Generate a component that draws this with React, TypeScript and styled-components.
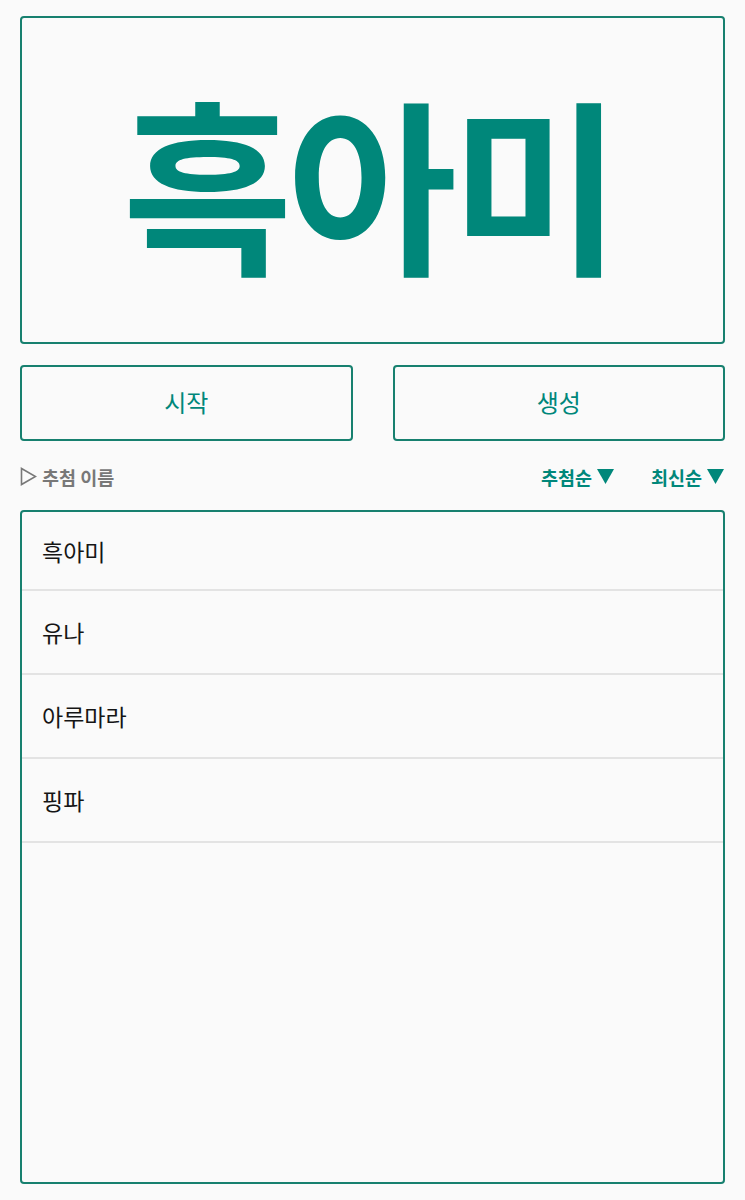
import React from "react";
import styled, { createGlobalStyle } from "styled-components";

const Global = createGlobalStyle`
  html, body { margin: 0; padding: 0; background: #fafafa; }
  body { font-family: "Noto Sans CJK KR", "Noto Sans", sans-serif; }
`;

const TEAL = "#00877a";
const BORDER = "#17806f";

const Page = styled.div`
  box-sizing: border-box;
  height: 1200px;
  padding: 16px 20px 16px 20px;
  display: flex;
  flex-direction: column;
`;

const Display = styled.div`
  box-sizing: border-box;
  height: 328px;
  border: 2px solid ${BORDER};
  border-radius: 4px;
  display: flex;
  align-items: center;
  justify-content: center;
`;

const BigName = styled.div`
  font-size: 187px;
  font-weight: 700;
  color: ${TEAL};
  line-height: 1;
  letter-spacing: -6px;
  transform: translateX(-3px) scaleX(0.99);
  margin-top: -2px;
`;

const ButtonRow = styled.div`
  display: grid;
  grid-template-columns: 1fr 1fr;
  column-gap: 40px;
  margin-top: 21px;
`;

const ActionButton = styled.button`
  box-sizing: border-box;
  height: 76px;
  padding-bottom: 4px;
  border: 2px solid ${BORDER};
  border-radius: 4px;
  background: transparent;
  color: ${TEAL};
  font-family: "Noto Sans CJK KR", sans-serif;
  font-size: 24px;
  font-weight: 400;
`;

const HeaderRow = styled.div`
  box-sizing: border-box;
  display: flex;
  align-items: center;
  height: 69px;
  padding-top: 2px;
`;

const Title = styled.div`
  color: #787878;
  font-size: 18.5px;
  font-weight: 700;
  flex: 1;
  display: flex;
  align-items: center;
  gap: 5px;
`;

const SortButton = styled.div`
  color: ${TEAL};
  font-size: 18.5px;
  font-weight: 700;
  margin-left: 36px;
  display: flex;
  align-items: center;
  gap: 4px;
`;

const List = styled.div`
  box-sizing: border-box;
  flex: 1;
  border: 2px solid ${BORDER};
  border-radius: 4px;
  display: flex;
  flex-direction: column;
`;

const Row = styled.div`
  box-sizing: border-box;
  height: 84px;
  border-bottom: 2px solid #e3e3e3;
  display: flex;
  align-items: center;
  padding-left: 20px;
  font-size: 23px;
  color: #151515;
  &:first-child { height: 79px; }
`;

const Tri = ({ down, color }: { down?: boolean; color: string }) =>
  down ? (
    <svg width="19" height="17" viewBox="0 0 19 17">
      <polygon points="1,1 18,1 9.5,16" fill={color} />
    </svg>
  ) : (
    <svg width="17" height="19" viewBox="0 0 17 19">
      <polygon points="1.5,1.5 15.5,9.5 1.5,17.5" fill="none" stroke={color} strokeWidth="1.6" />
    </svg>
  );

export default function App() {
  const names = ["흑아미", "유나", "아루마라", "핑파"];
  return (
    <>
      <Global />
      <Page>
        <Display>
          <BigName>흑아미</BigName>
        </Display>
        <ButtonRow>
          <ActionButton>시작</ActionButton>
          <ActionButton>생성</ActionButton>
        </ButtonRow>
        <HeaderRow>
          <Title>
            <Tri color="#787878" /> 추첨 이름
          </Title>
          <SortButton>
            추첨순 <Tri down color={TEAL} />
          </SortButton>
          <SortButton>
            최신순 <Tri down color={TEAL} />
          </SortButton>
        </HeaderRow>
        <List>
          {names.map((n) => (
            <Row key={n}>{n}</Row>
          ))}
        </List>
      </Page>
    </>
  );
}
